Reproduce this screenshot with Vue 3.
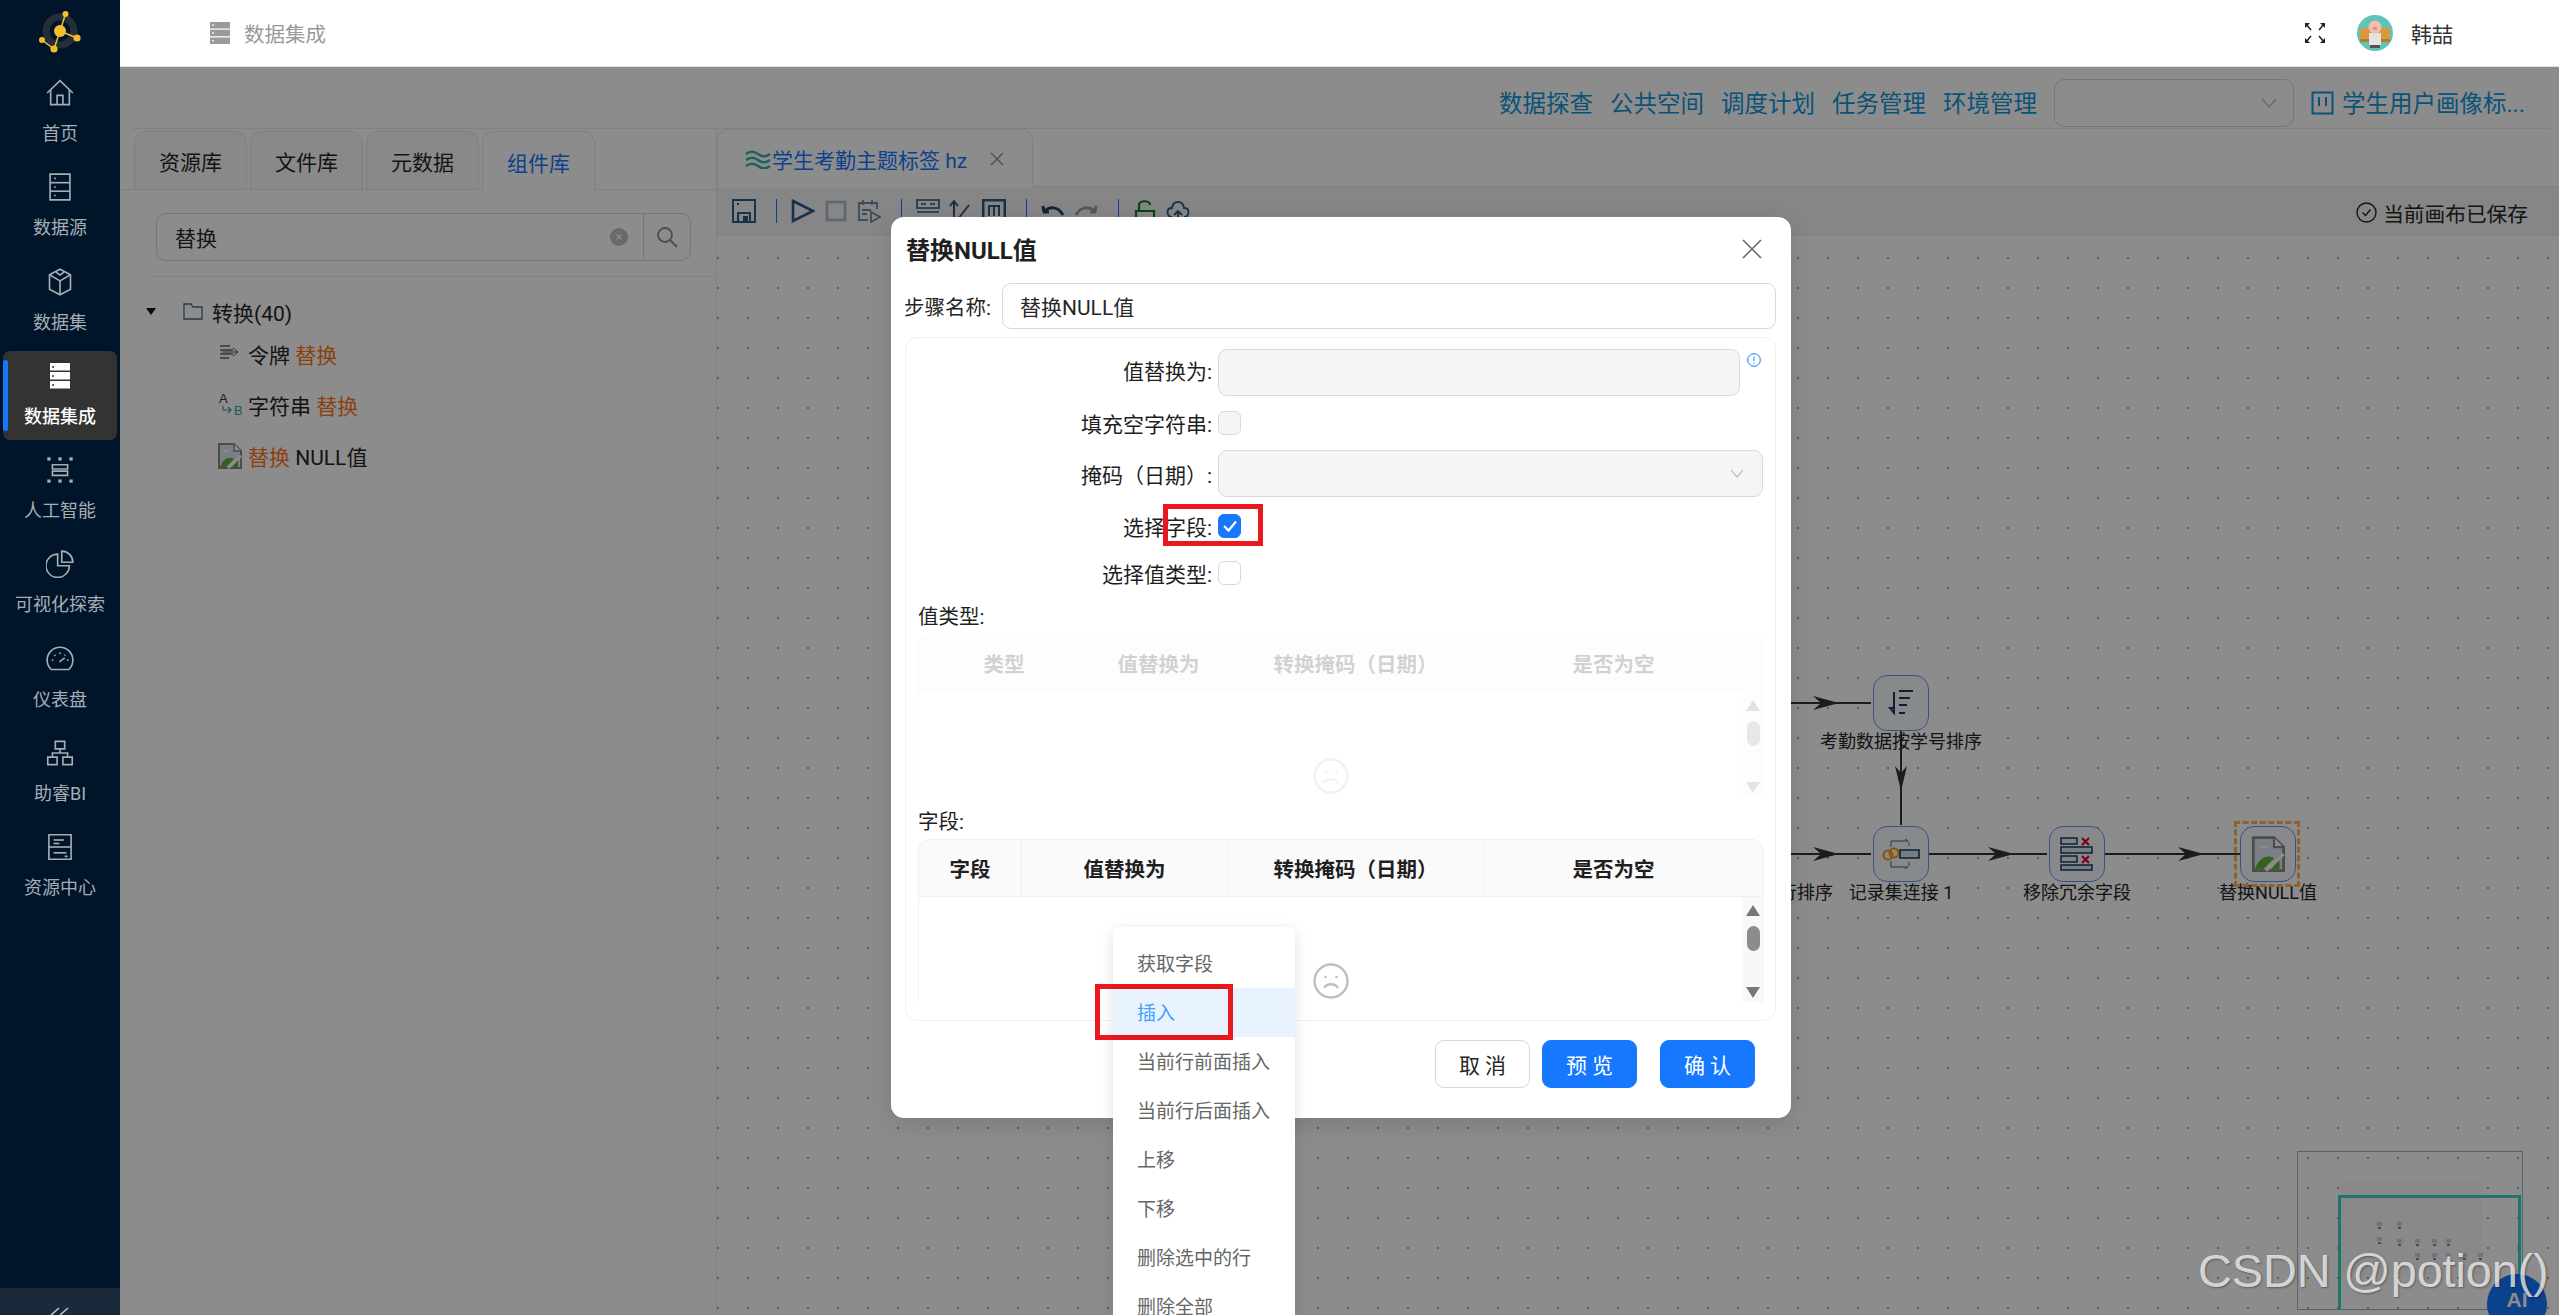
<script setup>
const menu = [
  { label: '首页', paths: ['M1 12 12 1.5 23 12', 'M4 9.5V22h16V9.5', 'M9.5 22v-8h5v8'] },
  { label: '数据源', paths: ['M3.5 1h17v22h-17z', 'M3.5 8.3h17', 'M3.5 15.6h17', 'M7 4.6h1.4', 'M7 12h1.4', 'M7 19.3h1.4'] },
  { label: '数据集', paths: ['M12 1 21 5.8v12.4L12 23l-9-4.8V5.8z', 'M3 5.8 12 11l9-5.2', 'M12 11v12', 'M8.5 3.6l3.5 2.4 3.5-2.4'] },
  { label: '数据集成', active: true },
  { label: '人工智能', paths: ['M5.5 7.5h13v3.6h-13z', 'M5.5 13h13v3.6h-13z', 'M1.8 1.8h1.4v1.4H1.8z', 'M11.3 1.8h1.4v1.4h-1.4z', 'M20.8 1.8h1.4v1.4h-1.4z', 'M1.8 20.8h1.4v1.4H1.8z', 'M11.3 20.8h1.4v1.4h-1.4z', 'M20.8 20.8h1.4v1.4h-1.4z'] },
  { label: '可视化探索', paths: ['M10 3.5a10 10 0 1 0 10 10H10z', 'M13.5 1a9.5 9.5 0 0 1 9.5 9.5h-9.5z'] },
  { label: '仪表盘', paths: ['M4.5 21a11 11 0 1 1 15 0z', 'M11.5 14.5l4.5-3.5', 'M5 13h1.2', 'M18 13h1.2', 'M12 6.5v1.2', 'M7.2 8.5l.8.8', 'M16.5 8.5l-.6.6'] },
  { label: '助睿BI', paths: ['M8 2h8v6.5H8z', 'M1.5 15.5h8V22h-8z', 'M14.5 15.5h8V22h-8z', 'M5.5 15.5V12h13v3.5', 'M12 8.5V12'] },
  { label: '资源中心', paths: ['M2.5 1.5h19v21h-19z', 'M2.5 12h19', 'M6.5 6h9', 'M6.5 9h5', 'M6.5 17h11', 'M16 20h2.5'] },
]

const links = ['数据探查', '公共空间', '调度计划', '任务管理', '环境管理']
const sideTabs = ['资源库', '文件库', '元数据', '组件库']
const contextItems = ['获取字段', '插入', '当前行前面插入', '当前行后面插入', '上移', '下移', '删除选中的行', '删除全部']

const tables = [
  { name: '值类型:', faded: true, cols: [['类型', 171], ['值替换为', 138], ['转换掩码（日期）', 256], ['是否为空', 281]] },
  { name: '字段:', faded: false, cols: [['字段', 103], ['值替换为', 206], ['转换掩码（日期）', 256], ['是否为空', 281]] },
]

// canvas coordinates, origin is the top left of the canvas
const nodes = [
  { id: 'sort', x: 1156, y: 439, label: '考勤数据按学号排序' },
  { id: 'join', x: 1156, y: 590, label: '记录集连接 1' },
  { id: 'drop', x: 1332, y: 590, label: '移除冗余字段' },
  { id: 'nullv', x: 1523, y: 590, label: '替换NULL值', selected: true },
]

const edges = [
  { x1: 1074, y1: 467, x2: 1154, y2: 467, tip: 1122 },
  { x1: 1074, y1: 618, x2: 1154, y2: 618, tip: 1122 },
  { x1: 1184, y1: 495, x2: 1184, y2: 589, tip: 555 },
  { x1: 1212, y1: 618, x2: 1330, y2: 618, tip: 1297 },
  { x1: 1388, y1: 618, x2: 1523, y2: 618, tip: 1487 },
]

function arrow(e) {
  if (e.x1 === e.x2) {
    const x = e.x1
    const t = e.tip
    return `${x},${t} ${x - 6},${t - 25} ${x},${t - 18} ${x + 6},${t - 25}`
  }
  const y = e.y1
  const t = e.tip
  return `${t},${y} ${t - 26},${y - 7} ${t - 18},${y} ${t - 26},${y + 7}`
}

const miniNodes = [
  [79, 70], [99, 70], [79, 85], [99, 87], [117, 87], [134, 87], [148, 87],
  [117, 101], [134, 101], [148, 101], [164, 101], [180, 101],
]
</script>

<template>
  <div class="app">
    <svg class="defs" width="0" height="0">
      <symbol id="broken-img" viewBox="0 0 24 26">
        <path d="M1 1h15l7 7v17H1z" fill="#dfe6f2" stroke="#8a8a8a" stroke-width="2" />
        <path d="M16 1v7h7" fill="#fff" stroke="#8a8a8a" stroke-width="1.5" />
        <path d="M5 9c1-3 6-3 7 0z" fill="#fff" />
        <path d="M2 24c3-8 9-11 14-8l-8 8z" fill="#5db32c" />
        <path d="M20 17v7h-6z" fill="#5db32c" />
        <path d="M10 25 23 13" stroke="#fff" stroke-width="2.5" />
      </symbol>
    </svg>

    <aside class="sidebar">
      <div class="logo">
        <svg width="80" height="60" viewBox="0 0 80 60">
          <circle cx="40" cy="31" r="14" fill="none" stroke="#252e38" stroke-width="7" />
          <g stroke="#f5bd2c" stroke-width="1.5" fill="none">
            <path d="M40 31 45.5 14" />
            <path d="M40 31 57 38" />
            <path d="M40 31 34 49 22 40" />
          </g>
          <g fill="#f5bd2c">
            <circle cx="40" cy="31" r="6" />
            <circle cx="45.5" cy="14" r="3" />
            <circle cx="57" cy="38" r="3.6" />
            <circle cx="22" cy="40" r="3" />
            <circle cx="34" cy="49" r="3.6" />
          </g>
        </svg>
      </div>
      <nav class="menu">
        <a v-for="item in menu" :key="item.label" class="menu__item" :class="{ 'menu__item--active': item.active }">
          <svg v-if="item.active" class="menu__icon" viewBox="0 0 28 28" fill="#fff">
            <path d="M4 1h20v7.5H4z" />
            <path d="M4 10h20v7.5H4z" />
            <path d="M4 19h20v7.5H4z" />
            <g fill="#333"><circle cx="7" cy="5" r="1" /><circle cx="7" cy="14" r="1" /><circle cx="7" cy="23" r="1" /></g>
          </svg>
          <svg v-else class="menu__icon" viewBox="0 0 24 24" fill="none" stroke="#a6adb4" stroke-width="1.4">
            <path v-for="d in item.paths" :key="d" :d="d" />
          </svg>
          <span class="menu__label">{{ item.label }}</span>
        </a>
      </nav>
      <div class="collapse">
        <svg width="24" height="27" viewBox="0 0 24 27" fill="none" stroke="#c0c6cc" stroke-width="1.6">
          <path d="M11 20 3 27" />
          <path d="M20 20 12 27" />
        </svg>
      </div>
    </aside>

    <div class="page">
      <header class="header">
        <svg class="header__icon" width="20" height="22" viewBox="0 0 20 22" fill="#9a9a9a">
          <path d="M0 0h20v6.5H0z" />
          <path d="M0 7.7h20v6.5H0z" />
          <path d="M0 15.5h20V22H0z" />
          <g fill="#fff"><circle cx="3" cy="3.2" r=".9" /><circle cx="3" cy="11" r=".9" /><circle cx="3" cy="18.7" r=".9" /></g>
        </svg>
        <span class="header__title">数据集成</span>
        <svg class="header__full" width="22" height="22" viewBox="0 0 22 22" fill="none" stroke="#222" stroke-width="1.5">
          <path d="M2 2l5 6" />
          <path d="M20 2l-5 6" />
          <path d="M2 20l5-6" />
          <path d="M20 20l-5-6" />
          <g fill="#222" stroke="none">
            <path d="M1 1h5L1 6z" />
            <path d="M21 1h-5l5 5z" />
            <path d="M1 21h5l-5-5z" />
            <path d="M21 21h-5l5-5z" />
          </g>
        </svg>
        <svg class="header__avatar" width="36" height="36" viewBox="0 0 36 36">
          <circle cx="18" cy="18" r="18" fill="#5cc5b5" />
          <path d="M3 13h30v12H3z" fill="#d99a3f" />
          <path d="M3 24h30v3H3z" fill="#b97a2b" />
          <path d="M12 18h12v12H12z" fill="#e4e4e0" />
          <circle cx="18" cy="12" r="6.5" fill="#f3bfb0" />
          <ellipse cx="18" cy="13.5" rx="2.4" ry="1.6" fill="#e08f87" />
          <path d="M13 30h10v3H13z" fill="#55534f" />
        </svg>
        <span class="header__name">韩喆</span>
      </header>

      <div class="body">
        <div class="topbar">
          <a v-for="link in links" :key="link" class="topbar__link">{{ link }}</a>
          <div class="topbar__select">
            <svg width="16" height="10" viewBox="0 0 16 10" fill="none" stroke="#bfbfbf" stroke-width="1.4"><path d="M1 1l7 8 7-8" /></svg>
          </div>
          <svg class="topbar__board" width="23" height="24" viewBox="0 0 23 24" fill="none" stroke="#1296db" stroke-width="2">
            <path d="M1.5 1.5h20v21h-20z" />
            <path d="M8 6v9" />
            <path d="M15 6v9" />
          </svg>
          <a class="topbar__link topbar__link--name">学生用户画像标...</a>
        </div>

        <div class="workspace">
          <section class="left">
            <div class="left__tabs">
              <button v-for="tab in sideTabs" :key="tab" class="left__tab" :class="{ 'left__tab--active': tab === '组件库' }">{{ tab }}</button>
            </div>
            <div class="search">
              <div class="search__field">
                <span>替换</span>
                <svg width="18" height="18" viewBox="0 0 18 18">
                  <circle cx="9" cy="9" r="9" fill="#bfbfbf" />
                  <path d="M6.5 6.5l5 5M11.5 6.5l-5 5" stroke="#fff" stroke-width="1.2" />
                </svg>
              </div>
              <button class="search__btn">
                <svg width="24" height="24" viewBox="0 0 24 24" fill="none" stroke="#8c8c8c" stroke-width="1.8">
                  <circle cx="10" cy="10" r="7" />
                  <path d="M15 15l7 7" />
                </svg>
              </button>
            </div>
            <div class="tree">
              <div class="tree__root">
                <span class="tree__caret"></span>
                <svg width="20" height="17" viewBox="0 0 20 17" fill="none" stroke="#4a6a88" stroke-width="1.3">
                  <path d="M1 1h7l2 3h9v12H1z" />
                </svg>
                <span>转换(40)</span>
              </div>
              <div class="tree__item">
                <svg class="tree__icon" width="22" height="20" viewBox="0 0 22 20" fill="none" stroke="#5c6670" stroke-width="1.5">
                  <path d="M1 2h10M1 6h13M1 10h13M1 14h9" />
                  <path d="M14 4l5 4-5 4M3 8h16" stroke-width="1" />
                </svg>
                <span><span>令牌</span> <em class="hit">替换</em></span>
              </div>
              <div class="tree__item">
                <svg class="tree__icon" width="22" height="26" viewBox="0 0 22 26">
                  <text x="0" y="11" font-size="13" font-family="Liberation Sans, sans-serif" fill="#333">A</text>
                  <text x="15" y="23" font-size="13" font-family="Liberation Sans, sans-serif" fill="#3aa3a6">B</text>
                  <path d="M4 14v4h8m-3-3 3 3-3 3" fill="none" stroke="#3aa3a6" stroke-width="1.2" />
                </svg>
                <span><span>字符串</span> <em class="hit">替换</em></span>
              </div>
              <div class="tree__item">
                <svg class="tree__icon" width="24" height="26"><use href="#broken-img" /></svg>
                <span><em class="hit">替换</em> NULL值</span>
              </div>
            </div>
          </section>

          <section class="right">
            <div class="right__tabs">
              <div class="right__tab">
                <svg width="26" height="20" viewBox="0 0 26 20" fill="none" stroke="#38b2a3" stroke-width="2.6">
                  <path d="M1 5c4-3 8-3 12 0s8 3 12 0" />
                  <path d="M1 11c4-3 8-3 12 0s8 3 12 0" />
                  <path d="M1 17c4-3 8-3 12 0s8 3 12 0" />
                </svg>
                <span class="right__tab-name">学生考勤主题标签 hz</span>
                <svg width="14" height="14" viewBox="0 0 14 14" stroke="#8c8c8c" stroke-width="1.4"><path d="M1 1l12 12M13 1 1 13" /></svg>
              </div>
            </div>
            <div class="toolbar">
              <svg class="tool" viewBox="0 0 24 24" fill="none" stroke="#2e5a86" stroke-width="2">
                <path d="M1 1h22v22H1z" />
                <path d="M6 14h12v9H6z" />
                <path d="M5 5h2" />
                <path d="M12 18h3v5h-3z" fill="#2e5a86" />
              </svg>
              <i class="tool-sep"></i>
              <svg class="tool" viewBox="0 0 24 24" fill="none" stroke="#2e5a86" stroke-width="2.6"><path d="M2 2l20 10L2 22z" /></svg>
              <svg class="tool" viewBox="0 0 24 24" fill="none" stroke="#a9bdd0" stroke-width="2.6"><path d="M3 3h18v18H3z" /></svg>
              <svg class="tool" viewBox="0 0 24 24" fill="none" stroke="#6e8aa6" stroke-width="1.8">
                <path d="M11 21H2V4h18v6" />
                <path d="M6 1v5M15 1v5M5 11h9M5 15h5" />
                <path d="M14 13l9 5-9 5z" />
              </svg>
              <i class="tool-sep"></i>
              <svg class="tool" viewBox="0 0 24 24" fill="none" stroke="#5a7c9c" stroke-width="2"><path d="M1 1h22v8H1z" /><path d="M5 5h5M14 5h5" /><path d="M1 13h22" /></svg>
              <svg class="tool" viewBox="0 0 24 24" fill="none" stroke="#2e5a86" stroke-width="2"><path d="M5 24V3M1 7l4-5 4 5" /><path d="M9 20 20 6" /></svg>
              <svg class="tool" viewBox="0 0 24 24" fill="none" stroke="#2e5a86" stroke-width="3"><path d="M1 1h22v22H1z" /><path d="M7 17V7h10v10M12 7v10" stroke-width="2" /></svg>
              <i class="tool-sep"></i>
              <svg class="tool" viewBox="0 0 24 24" fill="none" stroke="#1f4566" stroke-width="3"><path d="M3 13 2 7M2 13h6" /><path d="M3 13c5-6 14-6 19 3" /></svg>
              <svg class="tool" viewBox="0 0 24 24" fill="none" stroke="#a0a0a0" stroke-width="3"><path d="M21 13l1-6M22 13h-6" /><path d="M21 13C16 7 7 7 2 16" /></svg>
              <i class="tool-sep"></i>
              <svg class="tool" viewBox="0 0 24 24" fill="none" stroke="#15801b" stroke-width="2.2"><path d="M6 12V6c0-5 11-5 11 0" /><path d="M3 12h18v11H3z" /></svg>
              <svg class="tool" viewBox="0 0 24 24" fill="none" stroke="#2e5a86" stroke-width="1.8"><path d="M6 18C0 17 0 9 6 9c1-8 11-8 12 0 6 0 6 8 0 9" /><path d="M12 22v-9M8 16l4-4 4 4" /></svg>
              <div class="toolbar__saved">
                <svg width="21" height="21" viewBox="0 0 21 21" fill="none" stroke="#262626" stroke-width="1.4">
                  <circle cx="10.5" cy="10.5" r="9.5" />
                  <path d="M6.5 10.5l3 3 5-6" />
                </svg>
                <span>当前画布已保存</span>
              </div>
            </div>

            <div class="canvas">
              <svg class="canvas__edges" width="1842" height="1078">
                <g v-for="(e, i) in edges" :key="i">
                  <line :x1="e.x1" :y1="e.y1" :x2="e.x2" :y2="e.y2" stroke="#333" stroke-width="2" />
                  <polygon :points="arrow(e)" fill="#333" />
                </g>
              </svg>
              <span class="canvas__cut-label">数据进行排序</span>
              <div
                v-for="node in nodes"
                :key="node.id"
                class="node"
                :class="{ 'node--selected': node.selected }"
                :style="{ left: node.x + 'px', top: node.y + 'px' }"
              >
                <div class="node__box">
                  <svg v-if="node.id === 'sort'" width="30" height="30" viewBox="0 0 30 30" fill="none" stroke="#1c3c58" stroke-width="2">
                    <path d="M8 4v20M4 20l4 5 0-5z" />
                    <path d="M13 3h14M13 10h11M13 17h8M13 25h6" />
                  </svg>
                  <svg v-else-if="node.id === 'join'" width="38" height="30" viewBox="0 0 38 30" fill="none">
                    <circle cx="6" cy="16" r="4.5" stroke="#ff9800" stroke-width="2" />
                    <circle cx="12" cy="14" r="4.5" stroke="#ff9800" stroke-width="2" />
                    <path d="M9 8V2h17M9 22v6h17" stroke="#44607a" stroke-width="1" />
                    <path d="M26 2l-3-2M26 28l-3 2M27 7V3M27 23v4" stroke="#44607a" stroke-width="1" />
                    <path d="M18 11h19v8H18z" fill="#d6e6f5" stroke="#1c3c58" stroke-width="1.6" />
                  </svg>
                  <svg v-else-if="node.id === 'drop'" width="34" height="34" viewBox="0 0 34 34" fill="none" stroke="#1c3c58" stroke-width="1.5">
                    <path d="M1 1h16v6H1z" fill="#e8eef5" />
                    <path d="M1 10h31v6H1z" fill="#d6e6f5" />
                    <path d="M1 19h16v6H1z" fill="#e8eef5" />
                    <path d="M1 28h31v5H1z" fill="#d6e6f5" />
                    <g stroke="#e0002a" stroke-width="2.2">
                      <path d="M22 1l7 7M29 1l-7 7" />
                      <path d="M22 19l7 7M29 19l-7 7" />
                    </g>
                  </svg>
                  <svg v-else width="33" height="36"><use href="#broken-img" /></svg>
                </div>
                <span class="node__label">{{ node.label }}</span>
              </div>

              <div class="minimap">
                <div class="minimap__paper"></div>
                <div class="minimap__view"></div>
                <i v-for="(m, i) in miniNodes" :key="i" class="minimap__node" :style="{ left: m[0] + 'px', top: m[1] + 'px' }"></i>
              </div>
              <div class="ai">AI</div>
            </div>
          </section>
        </div>

        <div class="mask"></div>

        <div class="modal">
          <div class="modal__head">
            <span class="modal__title">替换NULL值</span>
            <svg width="22" height="22" viewBox="0 0 22 22" stroke="#666" stroke-width="1.5"><path d="M2 2l18 18M20 2 2 20" /></svg>
          </div>
          <div class="modal__name">
            <label>步骤名称:</label>
            <div class="input">替换NULL值</div>
          </div>

          <div class="card">
            <div class="row row--first">
              <label>值替换为:</label>
              <div class="input input--disabled input--short"></div>
              <svg class="row__info" width="14" height="14" viewBox="0 0 14 14" fill="none" stroke="#1677ff">
                <circle cx="7" cy="7" r="6.3" />
                <path d="M7 3.5v4.5M7 9.5v1.2" />
              </svg>
            </div>
            <div class="row row--check">
              <label>填充空字符串:</label>
              <span class="check check--disabled"></span>
            </div>
            <div class="row row--mask">
              <label>掩码（日期）:</label>
              <div class="input input--disabled input--select">
                <svg width="14" height="9" viewBox="0 0 14 9" fill="none" stroke="#bfbfbf" stroke-width="1.2"><path d="M1 1l6 7 6-7" /></svg>
              </div>
            </div>
            <div class="row row--check row--pick">
              <label>选择字段:</label>
              <span class="check check--on">
                <svg width="16" height="14" viewBox="0 0 16 14" fill="none" stroke="#fff" stroke-width="2.2"><path d="M2 7l4.5 4.5L14 2.5" /></svg>
              </span>
            </div>
            <div class="row row--check row--last">
              <label>选择值类型:</label>
              <span class="check"></span>
            </div>

            <template v-for="table in tables" :key="table.name">
              <div class="block-title">{{ table.name }}</div>
              <div class="table" :class="{ 'table--faded': table.faded }">
                <div class="table__head">
                  <div
                    v-for="col in table.cols"
                    :key="col[0]"
                    class="table__th"
                    :style="{ width: col[1] + 'px' }"
                  >{{ col[0] }}</div>
                </div>
                <div class="table__body">
                  <div class="table__empty">
                    <svg width="36" height="36" viewBox="0 0 36 36" fill="none" stroke="#bfbfbf" stroke-width="2.4">
                      <circle cx="18" cy="18" r="16.5" />
                      <circle cx="12.5" cy="14" r="1.3" fill="#bfbfbf" stroke="none" />
                      <circle cx="23.5" cy="14" r="1.3" fill="#bfbfbf" stroke="none" />
                      <path d="M11 25c3-5 11-5 14 0" />
                    </svg>
                  </div>
                  <div class="scroll">
                    <i class="scroll__up"></i>
                    <i class="scroll__thumb"></i>
                    <i class="scroll__down"></i>
                  </div>
                </div>
              </div>
            </template>
          </div>

          <div class="modal__foot">
            <button class="btn">取 消</button>
            <button class="btn btn--primary">预 览</button>
            <button class="btn btn--primary btn--last">确 认</button>
          </div>
        </div>

        <ul class="context">
          <li v-for="item in contextItems" :key="item" class="context__item" :class="{ 'context__item--hover': item === '插入' }">{{ item }}</li>
        </ul>

        <div class="mark mark--check"></div>
        <div class="mark mark--insert"></div>
        <div class="watermark">CSDN @potion()</div>
      </div>
    </div>
  </div>
</template>

<style scoped>
.app {
  display: flex;
  width: 100%;
  height: 100vh;
  overflow: hidden;
  font-family: Roboto, "Noto Sans CJK SC", "Noto Sans", sans-serif;
  color: #262626;
}

.defs {
  position: absolute;
}

/* sidebar */
.sidebar {
  display: flex;
  flex-direction: column;
  flex-shrink: 0;
  width: 120px;
  background: #001529;
}

.logo {
  display: flex;
  justify-content: center;
  height: 68px;
}

.menu {
  display: flex;
  flex-direction: column;
  gap: 5.3px;
  padding: 0 3px;
}

.menu__item {
  position: relative;
  display: flex;
  flex-direction: column;
  align-items: center;
  gap: 15px;
  height: 89px;
  padding-top: 11px;
  box-sizing: border-box;
  border-radius: 7px;
}

.menu__item--active {
  background: #333;
}

.menu__item--active::before {
  content: "";
  position: absolute;
  left: 0;
  top: 9px;
  bottom: 9px;
  width: 5px;
  border-radius: 3px;
  background: #1677ff;
}

.menu__icon {
  width: 28px;
  height: 28px;
}

.menu__label {
  font-size: 18px;
  line-height: 24px;
  white-space: nowrap;
  color: #a6adb4;
}

.menu__item--active .menu__label {
  color: #fff;
  font-weight: 500;
}

.collapse {
  display: flex;
  justify-content: center;
  height: 27px;
  margin-top: auto;
  background: #1a2a3a;
}

/* header */
.page {
  display: flex;
  flex-direction: column;
  flex: 1;
  min-width: 0;
}

.header {
  display: flex;
  align-items: center;
  flex-shrink: 0;
  height: 67px;
  padding: 0 106px 0 90px;
  box-sizing: border-box;
  background: #fff;
  border-bottom: 1px solid #e3e3e3;
}

.header__title {
  margin-left: 14px;
  font-size: 20.5px;
  color: #999;
}

.header__full {
  margin-left: auto;
}

.header__avatar {
  margin-left: 31px;
}

.header__name {
  margin-left: 18px;
  font-size: 21px;
  color: #333;
}

.body {
  position: relative;
  display: flex;
  flex-direction: column;
  flex: 1;
  min-height: 0;
  overflow: hidden;
  background: #fff;
}

/* top link bar */
.topbar {
  display: flex;
  align-items: flex-end;
  justify-content: flex-end;
  flex-shrink: 0;
  gap: 17px;
  height: 62px;
  margin: 0 10px 0 12px;
  padding: 0 24px 1px 0;
  box-sizing: border-box;
  border-bottom: 1px solid #ebebeb;
}

.topbar__link {
  height: 48px;
  font-size: 23.5px;
  line-height: 51px;
  white-space: nowrap;
  color: #1296db;
}

.topbar__select {
  display: flex;
  align-items: center;
  justify-content: flex-end;
  width: 240px;
  height: 48px;
  padding-right: 16px;
  box-sizing: border-box;
  border: 1px solid #d9d9d9;
  border-radius: 10px;
}

.topbar__board {
  margin-bottom: 12px;
}

.topbar__link--name {
  margin-left: -9px;
}

.workspace {
  display: flex;
  flex: 1;
  min-height: 0;
}

/* left panel */
.left {
  flex-shrink: 0;
  width: 597px;
  box-sizing: border-box;
  border-right: 1px solid #ececec;
}

.left__tabs {
  display: flex;
  gap: 3px;
  height: 61px;
  padding: 2px 0 0 14px;
  box-sizing: border-box;
  border-bottom: 1px solid #e8e8e8;
}

.left__tab {
  width: 113px;
  height: 59px;
  padding: 0;
  border: 1px solid #e8e8e8;
  border-radius: 12px 12px 0 0;
  background: #fafafa;
  font: inherit;
  font-size: 21px;
  color: #262626;
}

.left__tab--active {
  height: 60px;
  border-bottom: 0;
  background: #fff;
  color: #1677ff;
}

.search {
  display: flex;
  height: 48px;
  margin: 23px 25px 15px 36px;
}

.search__field {
  display: flex;
  align-items: center;
  justify-content: space-between;
  flex: 1;
  padding: 0 15px 0 18px;
  border: 1px solid #d9d9d9;
  border-radius: 10px 0 0 10px;
  font-size: 21px;
}

.search__btn {
  display: flex;
  align-items: center;
  justify-content: center;
  width: 47px;
  padding: 0;
  border: 1px solid #d9d9d9;
  border-left: 0;
  border-radius: 0 10px 10px 0;
  background: #fff;
}

.tree {
  margin-left: 28px;
  padding-top: 18px;
  border-top: 1px solid #ebebeb;
  font-size: 21px;
}

.tree__root {
  display: flex;
  align-items: center;
  height: 33px;
}

.tree__caret {
  width: 0;
  height: 0;
  margin: 0 27px 0 -2px;
  border-style: solid;
  border-width: 7px 5.5px 0;
  border-color: #111 transparent transparent;
}

.tree__root svg {
  margin-right: 9px;
}

.tree__item {
  display: flex;
  align-items: center;
  height: 51px;
  padding-left: 70px;
}

.tree__icon {
  flex-shrink: 0;
  width: 24px;
  margin-right: 6px;
}

.hit {
  font-style: normal;
  color: #ff7414;
}

/* right panel */
.right {
  display: flex;
  flex-direction: column;
  flex: 1;
  min-width: 0;
}

.right__tabs {
  flex-shrink: 0;
  height: 58px;
  border-bottom: 1px solid #e8e8e8;
  box-sizing: border-box;
}

.right__tab {
  display: flex;
  align-items: center;
  gap: 1px;
  width: 316px;
  height: 58px;
  padding-left: 27px;
  box-sizing: border-box;
  border: 1px solid #e8e8e8;
  border-bottom: 0;
  border-radius: 12px 12px 0 0;
  background: #fff;
  font-size: 21px;
  color: #1677ff;
}

.right__tab-name {
  margin-right: 22px;
}

.toolbar {
  display: flex;
  align-items: center;
  flex-shrink: 0;
  gap: 9px;
  height: 49px;
  padding: 0 31px 0 15px;
  box-sizing: border-box;
  background: #f2f5f3;
  border-bottom: 1px solid #ebebeb;
}

.tool {
  flex-shrink: 0;
  width: 24px;
  height: 24px;
}

.tool-sep {
  width: 1px;
  height: 24px;
  margin: 0 5px 0 11px;
  background: #1677ff;
}

.toolbar__saved {
  display: flex;
  align-items: center;
  gap: 6px;
  margin-left: auto;
  padding-top: 3px;
  font-size: 20.7px;
  color: #262626;
}

.canvas {
  position: relative;
  flex: 1;
  min-height: 0;
  overflow: hidden;
  background-color: #fff;
  background-image: radial-gradient(circle at 1px 1px, #a8a8a8 1px, transparent 1.2px);
  background-position: 0 21px;
  background-size: 30px 30px;
}

.canvas__edges {
  position: absolute;
  left: 0;
  top: 0;
}

.canvas__cut-label {
  position: absolute;
  right: 726px;
  top: 647px;
  font-size: 18px;
  line-height: 20px;
  white-space: nowrap;
}

.node {
  position: absolute;
  display: flex;
  flex-direction: column;
  align-items: center;
  width: 56px;
}

.node__box {
  display: flex;
  align-items: center;
  justify-content: center;
  flex-shrink: 0;
  width: 56px;
  height: 56px;
  box-sizing: border-box;
  border: 1.5px solid #6c94f0;
  border-radius: 14px;
  background: #f7f9ff;
}

.node__label {
  font-size: 18px;
  line-height: 22px;
  white-space: nowrap;
  color: #262626;
}

.node--selected::before {
  content: "";
  position: absolute;
  left: -6px;
  top: -5px;
  width: 66px;
  height: 66px;
  box-sizing: border-box;
  border: 3px dashed #ffb451;
}

.minimap {
  position: absolute;
  left: 1580px;
  top: 915px;
  width: 226px;
  height: 159px;
  overflow: hidden;
  box-sizing: border-box;
  border: 1px solid #8db8dc;
}

.minimap__paper {
  position: absolute;
  left: 42px;
  top: 30px;
  width: 142px;
  height: 92px;
  background: #fafafa;
}

.minimap__view {
  position: absolute;
  left: 40px;
  top: 43px;
  width: 183px;
  height: 130px;
  box-sizing: border-box;
  border: 3px solid #38d9bb;
}

.minimap__node {
  position: absolute;
  width: 5px;
  height: 4px;
  background: #c9d4e8;
  box-shadow: 0 4px 0 -1px #8a8a8a;
}

.ai {
  position: absolute;
  left: 1770px;
  top: 1038px;
  width: 60px;
  height: 60px;
  padding-top: 14px;
  box-sizing: border-box;
  border-radius: 50%;
  background: #1677ff;
  font-family: "Liberation Sans", sans-serif;
  font-size: 21px;
  font-weight: 700;
  text-align: center;
  color: #fff;
}

/* modal */
.mask {
  position: absolute;
  inset: 0;
  background: rgba(0, 0, 0, 0.45);
}

.modal {
  position: absolute;
  left: 771px;
  top: 150px;
  width: 900px;
  height: 901px;
  box-sizing: border-box;
  border-radius: 13px;
  background: #fff;
  box-shadow: 0 6px 24px rgba(0, 0, 0, 0.12);
}

.modal__head {
  display: flex;
  align-items: center;
  justify-content: space-between;
  height: 66px;
  padding: 0 28px 3px 15px;
  box-sizing: border-box;
}

.modal__title {
  font-size: 24px;
  font-weight: 700;
  color: #1f1f1f;
}

.modal__name {
  display: flex;
  align-items: center;
  margin: 0 15px 0 13px;
  font-size: 20.5px;
}

.modal__name label {
  width: 98px;
  flex-shrink: 0;
  white-space: nowrap;
}

.input {
  display: flex;
  align-items: center;
  flex: 1;
  height: 46px;
  padding: 0 17px;
  box-sizing: border-box;
  border: 1px solid #d9d9d9;
  border-radius: 9px;
  font-size: 21px;
}

.input--disabled {
  flex: none;
  width: 545px;
  height: 47px;
  background: #f5f5f5;
}

.input--short {
  width: 522px;
}

.input--select {
  justify-content: flex-end;
  padding-right: 18px;
}

.card {
  height: 684px;
  margin: 8px 15px 0 14px;
  padding: 11px 11px 0 12px;
  box-sizing: border-box;
  border: 1px solid #f0f0f0;
  border-radius: 12px;
}

.row {
  display: flex;
  align-items: center;
  margin-bottom: 15px;
  font-size: 21px;
  color: #1f1f1f;
}

.row label {
  width: 294px;
  margin-right: 6px;
  flex-shrink: 0;
  text-align: right;
  white-space: nowrap;
}

.row--first {
  align-items: flex-start;
}

.row--first label {
  line-height: 46px;
}

.row__info {
  margin: 4px 0 0 7px;
}

.row--check {
  height: 24px;
}

.row--mask {
  margin-bottom: 17px;
}

.row--pick {
  margin-bottom: 23px;
}

.row--last {
  margin-bottom: 18px;
}

.check {
  display: flex;
  align-items: center;
  justify-content: center;
  width: 23px;
  height: 24px;
  box-sizing: border-box;
  border: 1px solid #d9d9d9;
  border-radius: 6px;
}

.check--disabled {
  background: #f5f5f5;
}

.check--on {
  border-color: #1677ff;
  background: #1677ff;
}

.block-title {
  height: 28px;
  margin-top: 11px;
  font-size: 20.5px;
  line-height: 28px;
  color: #1f1f1f;
}

.table {
  width: 846px;
  margin-top: 3px;
  border-radius: 12px 12px 0 0;
  border-left: 1px solid #f0f0f0;
  box-sizing: border-box;
}

.table--faded {
  opacity: 0.2;
}

.table__head {
  display: flex;
  height: 58px;
  box-sizing: border-box;
  border: 1px solid #f0f0f0;
  border-left: 0;
  border-radius: 12px 12px 0 0;
  background: #fafafa;
}

.table__th {
  display: flex;
  align-items: center;
  justify-content: center;
  flex-shrink: 0;
  box-sizing: border-box;
  border-right: 1px solid #f0f0f0;
  font-size: 20.5px;
  font-weight: 700;
  color: #1f1f1f;
}

.table__th:last-child {
  padding-right: 22px;
  border-right: 0;
}

.table__body {
  display: flex;
  height: 105px;
  overflow: hidden;
}

.table__empty {
  display: flex;
  justify-content: center;
  flex: 1;
  padding-top: 66px;
}

.scroll {
  position: relative;
  flex-shrink: 0;
  width: 21px;
  background: #f8f8f8;
}

.scroll__up,
.scroll__down {
  position: absolute;
  left: 3px;
  width: 0;
  height: 0;
  border-style: solid;
  border-color: transparent;
}

.scroll__up {
  top: 8px;
  border-width: 0 7.5px 11px;
  border-bottom-color: #777;
}

.scroll__down {
  top: 90px;
  border-width: 11px 7.5px 0;
  border-top-color: #777;
}

.scroll__thumb {
  position: absolute;
  left: 4px;
  top: 29px;
  width: 13px;
  height: 25px;
  border-radius: 7px;
  background: #8c8c8c;
}

.modal__foot {
  display: flex;
  justify-content: flex-end;
  gap: 12px;
  margin: 19px 36px 0 0;
}

.btn {
  width: 95px;
  height: 48px;
  padding: 0;
  border: 1px solid #d9d9d9;
  border-radius: 9px;
  background: #fff;
  font: inherit;
  font-size: 21px;
  color: #262626;
}

.btn--primary {
  border-color: #1677ff;
  background: #1677ff;
  color: #fff;
}

.btn--last {
  margin-left: 11px;
}

/* context menu and annotations */
.context {
  position: absolute;
  left: 993px;
  top: 860px;
  width: 182px;
  margin: 0;
  padding: 12px 0;
  list-style: none;
  border-radius: 6px 6px 0 0;
  background: #fff;
  box-shadow: 0 3px 14px rgba(0, 0, 0, 0.12);
}

.context__item {
  height: 49px;
  padding-left: 24px;
  font-size: 19px;
  line-height: 51px;
  color: #666;
}

.context__item--hover {
  background: #e9f3ff;
  color: #409eff;
}

.mark {
  position: absolute;
  box-sizing: border-box;
  border: 5px solid #e8191c;
}

.mark--check {
  left: 1043px;
  top: 437px;
  width: 100px;
  height: 42px;
}

.mark--insert {
  left: 975px;
  top: 917px;
  width: 138px;
  height: 56px;
}

.watermark {
  position: absolute;
  left: 2078px;
  top: 1177px;
  font-family: "Liberation Sans", sans-serif;
  font-size: 47px;
  line-height: 54px;
  letter-spacing: -0.2px;
  white-space: nowrap;
  color: rgba(255, 255, 255, 0.72);
  text-shadow: 1px 1px 2px rgba(0, 0, 0, 0.35);
}
</style>

<style>
html,
body {
  margin: 0;
}
</style>
